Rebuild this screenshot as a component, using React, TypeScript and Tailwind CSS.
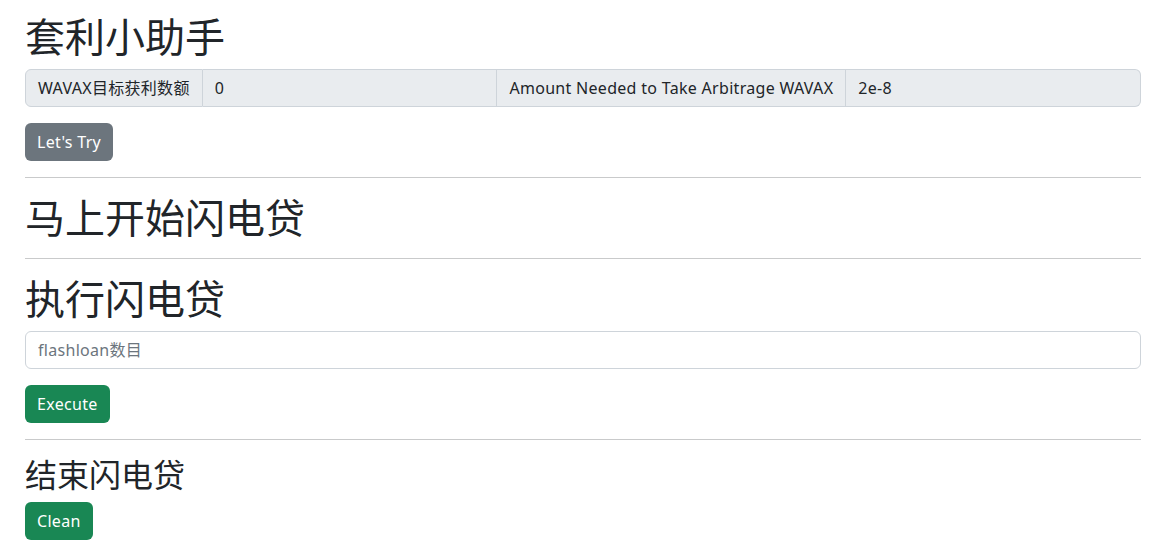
import React from "react";

const font = {
  fontFamily:
    '"Noto Sans", "Noto Sans CJK SC", sans-serif',
};

function Hr() {
  return <hr className="my-4 border-0 border-t border-t-[#c9cacb]" />;
}

export default function App() {
  return (
    <div className="min-h-[559px] bg-white text-[#212529] pl-[25px] pr-[24px] pt-[13px] pb-4 text-base leading-6" style={font}>
      <h1 className="text-[40px] leading-[48px] font-normal mb-2">套利小助手</h1>
      <div className="flex h-[38px] w-full tracking-[0.3px]">
        <span className="flex items-center px-3 bg-[#e9ecef] border border-[#ced4da] rounded-l-[6px] whitespace-nowrap">
          WAVAX目标获利数额
        </span>
        <input
          readOnly
          value="0"
          className="flex-1 min-w-0 px-3 bg-[#e9ecef] border border-l-0 border-[#ced4da] outline-none text-[#212529] tracking-[0.3px]"
          style={font}
        />
        <span className="flex items-center px-3 bg-[#e9ecef] border border-l-0 border-[#ced4da] whitespace-nowrap">
          Amount Needed to Take Arbitrage WAVAX
        </span>
        <input
          readOnly
          value="2e-8"
          className="flex-1 min-w-0 px-3 bg-[#e9ecef] border border-l-0 border-[#ced4da] rounded-r-[6px] outline-none text-[#212529] tracking-[0.3px]"
          style={font}
        />
      </div>
      <div className="mt-4">
        <button className="h-[38px] px-3 rounded-[6px] bg-[#6c757d] text-white tracking-[0.3px]" style={font}>
          Let's Try
        </button>
      </div>
      <Hr />
      <h1 className="text-[40px] leading-[48px] font-normal">马上开始闪电贷</h1>
      <Hr />
      <h1 className="text-[40px] leading-[48px] font-normal mb-2">执行闪电贷</h1>
      <input
        placeholder="flashloan数目"
        className="block w-full h-[38px] px-3 border border-[#ced4da] rounded-[6px] outline-none placeholder:text-[#6c757d] tracking-[0.3px]"
        style={font}
      />
      <div className="mt-4">
        <button className="h-[38px] px-3 rounded-[6px] bg-[#198754] text-white tracking-[0.3px]" style={font}>
          Execute
        </button>
      </div>
      <Hr />
      <h2 className="text-[32px] leading-[38px] font-normal mb-2">结束闪电贷</h2>
      <button className="h-[38px] px-3 rounded-[6px] bg-[#198754] text-white tracking-[0.3px]" style={font}>
        Clean
      </button>
    </div>
  );
}
